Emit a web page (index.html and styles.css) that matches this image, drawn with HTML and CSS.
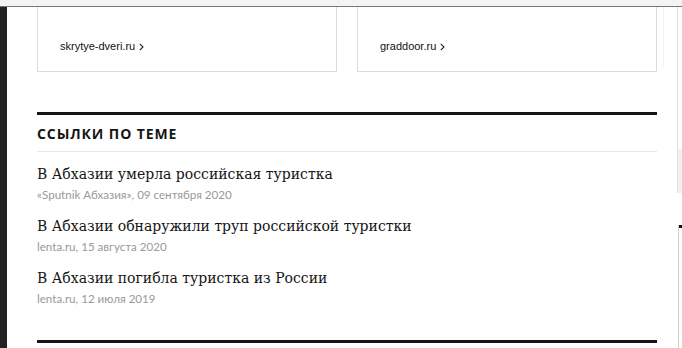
FILE: index.html
```html
<!DOCTYPE html>
<html lang="ru">
<head>
<meta charset="utf-8">
<link rel="stylesheet" href="styles.css">
</head>
<body>
<div class="topbar"></div>
<div class="page">
  <div class="leftbar"></div>
  <main class="main">
    <div class="cards">
      <div class="card"><a class="card-link" href="#">skrytye-dveri.ru <svg class="chev" width="5" height="8" viewBox="0 0 5 8"><path d="M0.8 0.8 L4 4 L0.8 7.2" fill="none" stroke="#222" stroke-width="1.1"/></svg></a></div>
      <div class="card"><a class="card-link" href="#">graddoor.ru <svg class="chev" width="5" height="8" viewBox="0 0 5 8"><path d="M0.8 0.8 L4 4 L0.8 7.2" fill="none" stroke="#222" stroke-width="1.1"/></svg></a></div>
    </div>
    <section class="related">
      <h2 class="related-title">ССЫЛКИ ПО ТЕМЕ</h2>
      <ul class="related-list">
        <li class="item">
          <a class="item-title" href="#">В Абхазии умерла российская туристка</a>
          <div class="item-meta">«Sputnik Абхазия», 09 сентября 2020</div>
        </li>
        <li class="item">
          <a class="item-title" href="#">В Абхазии обнаружили труп российской туристки</a>
          <div class="item-meta">lenta.ru, 15 августа 2020</div>
        </li>
        <li class="item">
          <a class="item-title" href="#">В Абхазии погибла туристка из России</a>
          <div class="item-meta">lenta.ru, 12 июля 2019</div>
        </li>
      </ul>
    </section>
    <div class="bottom-rule"></div>
  </main>
  <aside class="side">
    <div class="side-faint"></div>
    <div class="side-rail">
      <div class="rail-top"></div>
      <div class="rail-block"></div>
      <div class="rail-gap"></div>
      <div class="rail-bottom"></div>
    </div>
  </aside>
</div>
</body>
</html>
```
FILE: styles.css
```css
* { box-sizing: border-box; }
html, body { margin: 0; padding: 0; background: #fff; }
body { width: 682px; height: 348px; overflow: hidden; font-family: "Liberation Sans", Arial, sans-serif; color: #111; }

.topbar { height: 7px; background: #f4f4f4; border-bottom: 1px solid #777; }

.page { display: flex; height: 341px; }
.leftbar { width: 7px; background: #222; flex: none; }

.main { width: 650px; padding-left: 30px; flex: none; }

.cards { display: grid; grid-template-columns: 300px 300px; gap: 20px; }
.card { height: 65px; border: 1px solid #dcdcdc; border-top: none; padding: 29px 0 0 22px; }
.card-link { font-size: 11px; color: #111; text-decoration: none; line-height: 13px; display: inline-flex; align-items: center; gap: 4px; }
.chev { display: block; margin-top: 1px; }

.related { margin-top: 40px; border-top: 3px solid #151515; width: 620px; }
.related-title { margin: 0; font-family: "Open Sans", "Noto Sans", sans-serif; font-weight: 700; font-size: 14px; letter-spacing: 0.9px; line-height: 20px; padding: 9px 0 7px; border-bottom: 1px solid #e6e6e6; color: #151515; }

.related-list { list-style: none; margin: 0; padding: 12px 0 0; }
.item { margin-bottom: 12px; }
.item-title { display: block; font-family: "DejaVu Serif", serif; font-size: 14px; line-height: 20px; color: #151515; text-decoration: none; }
.item-meta { font-family: Lato, "Open Sans", sans-serif; font-size: 11.6px; line-height: 19px; color: #999; margin-top: 1px; }

.bottom-rule { width: 620px; height: 3px; background: #151515; margin-top: 32px; }

.side { flex: 1; display: flex; padding-left: 6px; }
.side-faint { width: 1px; height: 60px; background: #f3f3f3; }
.side-rail { margin-left: 13px; width: 6px; display: flex; flex-direction: column; }
.rail-top { height: 142px; border-left: 1px solid #dcdcdc; }
.rail-block { height: 44px; background: #f0f0f0; border-left: 1px solid #e4e4e4; }
.rail-gap { height: 32px; }
.rail-bottom { flex: 1; margin-left: 1px; border-left: 1px solid #cfcfcf; position: relative; }
.rail-bottom::before { content: ""; position: absolute; left: 0; top: 0; width: 3px; height: 3px; background: #111; }
```
